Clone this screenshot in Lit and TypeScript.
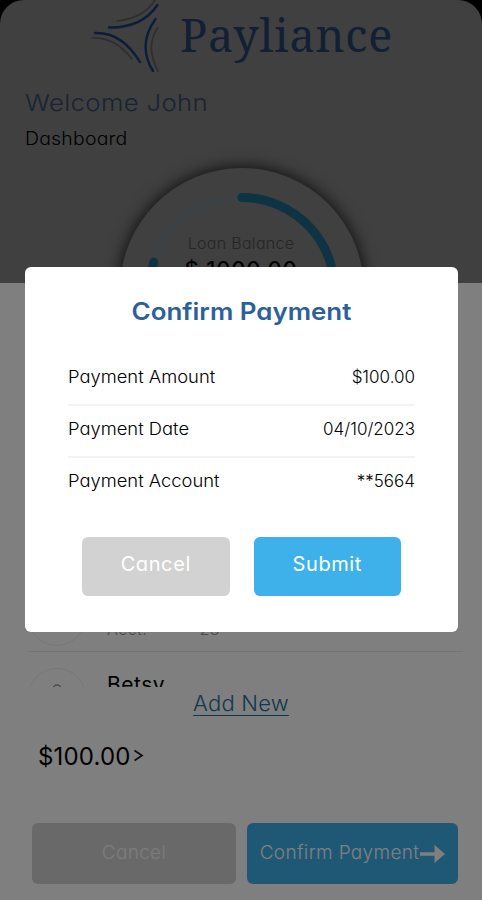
import { LitElement, html, css, svg } from "lit";
import { customElement } from "lit/decorators.js";

const rows = [
  ["Payment Amount", "$100.00"],
  ["Payment Date", "04/10/2023"],
  ["Payment Account", "**5664"],
];

@customElement("app-root")
export class AppRoot extends LitElement {
  static styles = css`
    :host { display: block; width: 482px; height: 900px; font-family: Inter, "Open Sans", sans-serif; font-feature-settings: "cv11", "ss03"; font-weight: 400; color: #000; }
    * { box-sizing: border-box; }
    .page { position: relative; height: 900px; overflow: hidden; background: #fff; display: flex; flex-direction: column; white-space: nowrap; }
    .top { height: 283px; background: #000; flex: none; }
    .header { height: 283px; background: #808080; border-radius: 24px 24px 0 0; display: flex; flex-direction: column; overflow: hidden; }
    .brand { height: 72px; flex: none; display: flex; padding-left: 88px; }
    .brand svg { width: 74px; height: 72px; flex: none; }
    .name { font-family: "Noto Serif", "Liberation Serif", serif; font-size: 45px; line-height: 69px; color: #243f68; margin-left: 18px; letter-spacing: .8px; font-feature-settings: normal; }
    .welcome { margin: 15px 0 0 25px; height: 32px; line-height: 32px; font-size: 23px; font-weight: 300; color: #30486a; letter-spacing: .3px; transform: scaleX(1.12); transform-origin: left; }
    .sub { margin: 7px 0 0 25px; height: 26px; line-height: 26px; font-size: 18px; font-weight: 300; letter-spacing: .2px; transform: scaleX(1.08); transform-origin: left; }
    .gauge { margin: 16px 0 0 120px; width: 244px; height: 244px; flex: none; border-radius: 50%; background: #808080; box-shadow: 0 0 16px 1px #000c; display: grid; }
    .gauge > * { grid-area: 1 / 1; }
    .gauge svg { width: 244px; height: 244px; }
    .balance { text-align: center; padding: 64px 2px 0 0; display: flex; flex-direction: column; }
    .balance .label { font-size: 16px; line-height: 22px; font-weight: 300; color: #4c4c4c; letter-spacing: .3px; }
    .balance .total { font-size: 22px; line-height: 28px; font-weight: 500; letter-spacing: .8px; margin-top: 1px; }
    .list { height: 404px; flex: none; overflow: hidden; padding: 303px 19px 0 28px; }
    .person { display: flex; align-items: center; height: 65.5px; border-bottom: 1px solid #ebebeb; margin-bottom: 14px; }
    .avatar { width: 58px; height: 58px; border: 1px solid #efefef; border-radius: 50%; display: flex; justify-content: center; padding-top: 14px; margin-top: -2px; }
    .avatar svg { width: 24px; height: 24px; }
    .info { margin: -5px 0 0 21px; display: flex; flex-direction: column; font-size: 21px; line-height: 26px; letter-spacing: .5px; }
    .info small { font-size: 16px; line-height: 20px; font-weight: 300; color: #999; word-spacing: 30px; }
    .add { align-self: center; height: 32px; line-height: 32px; font-size: 22px; font-weight: 300; color: #23719c; text-decoration: underline; text-underline-offset: 4px; text-decoration-thickness: 1px; letter-spacing: .2px; }
    .pay { display: flex; align-items: center; margin: 19px 0 0 38px; height: 36px; font-size: 24px; letter-spacing: .15px; }
    .pay svg { width: 11px; height: 14px; margin-left: 3px; }
    .actions { display: flex; gap: 11px; margin: 49px 24px 0 32px; height: 61px; flex: none; }
    .btn { display: flex; align-items: center; justify-content: center; border-radius: 6px; font-size: 20px; }
    .actions .btn { font-weight: 300; font-size: 19px; padding-bottom: 3px; }
    .actions .cancel { width: 204px; background: #d2d2d2; color: #f8f8f8; letter-spacing: .3px; }
    .actions .go { width: 211px; background: #3cb1ea; color: #fff; }
    .go span { letter-spacing: .35px; }
    .go svg { width: 25px; height: 20px; margin: 4px 0 0 1px; }
    .veil { position: absolute; inset: 0; background: rgba(0, 0, 0, .5); }
    .dialog { position: absolute; left: 25px; top: 267px; width: 433px; height: 365px; border-radius: 6px; background: #fff; padding: 27px 43px 0; }
    h2 { margin: 0 0 36px; font-size: 24px; font-weight: 600; line-height: 36px; text-align: center; color: #2c609c; transform: scaleX(1.08); }
    .row { display: flex; justify-content: space-between; align-items: flex-start; height: 52.3px; line-height: 22px; font-size: 17px; font-weight: 300; }
    .row + .row { border-top: 2px solid #f3f3f3; padding-top: 12px; }
    .row:first-of-type { height: 38px; }
    .key { transform: scaleX(1.08); transform-origin: left; }
    .choices { display: flex; justify-content: center; gap: 24px; margin: 28px 0 0; }
    .choices .btn { width: 147.5px; height: 59px; color: #fff; padding-bottom: 4px; letter-spacing: .6px; }
    .choices .no { background: #d2d2d2; }
    .choices .yes { background: #3eb1eb; }
  `;

  logo() {
    return svg`<g fill="none" stroke-linecap="round">
      <path d="M21 27.5 Q54 28 69.500 5" stroke="#173a70" stroke-width="2.4"/>
      <path d="M29 21 Q56 18 67 0" stroke="#5c5c5c" stroke-width="1.7"/>
      <path d="M7 33 Q34 32 52 62" stroke="#173a70" stroke-width="2.4"/>
      <path d="M4 38 Q27 37 44 59" stroke="#5c5c5c" stroke-width="1.7"/>
      <path d="M67.500 19 Q49 45 65 71" stroke="#173a70" stroke-width="2.4"/>
      <path d="M69.500 28 Q57 47 70 71" stroke="#5c5c5c" stroke-width="1.7"/></g>`;
  }

  person(name: string) {
    return html`<div class="person">
      <div class="avatar"><svg viewBox="0 0 24 24" fill="none" stroke="#999" stroke-width="1.5"><circle cx="12" cy="6" r="4"/><path d="M4 22q0-9 8-9t8 9"/></svg></div>
      <div class="info"><span>${name}</span><small>Acct: **23</small></div>
    </div>`;
  }

  render() {
    return html`<main class="page">
      <div class="top"><header class="header">
        <div class="brand"><svg viewBox="0 0 74 72">${this.logo()}</svg><span class="name">Payliance</span></div>
        <div class="welcome">Welcome John</div>
        <div class="sub">Dashboard</div>
        <div class="gauge">
          <svg viewBox="0 0 244 244" fill="none" stroke-width="9" stroke-linecap="round">
            <circle cx="122" cy="122" r="92.5" stroke="#7a8386"/>
            <path d="M122 29.5 A92.5 92.5 0 1 1 33.8 94" stroke="#1c6888"/>
          </svg>
          <div class="balance"><span class="label">Loan Balance</span><span class="total">$ 1000.00</span></div>
        </div>
      </header></div>
      <section class="list">${this.person("John")}${this.person("Betsy")}</section>
      <a class="add">Add New</a>
      <div class="pay"><span>$100.00</span><svg viewBox="0 0 11 14" fill="none" stroke="#222" stroke-width="1.8"><path d="M1.5 1.5 L9 6.5 L1.5 11.5"/></svg></div>
      <div class="actions">
        <div class="btn cancel">Cancel</div>
        <div class="btn go"><span>Confirm Payment</span><svg viewBox="0 0 25 20" fill="#fff"><path d="M0 8.2h14.5V1L25 10 14.5 19V11.8H0z"/></svg></div>
      </div>
      <div class="veil"></div>
      <section class="dialog">
        <h2>Confirm Payment</h2>
        ${rows.map(([key, value]) => html`<div class="row"><span class="key">${key}</span><span>${value}</span></div>`)}
        <div class="choices"><div class="btn no">Cancel</div><div class="btn yes">Submit</div></div>
      </section>
    </main>`;
  }
}
